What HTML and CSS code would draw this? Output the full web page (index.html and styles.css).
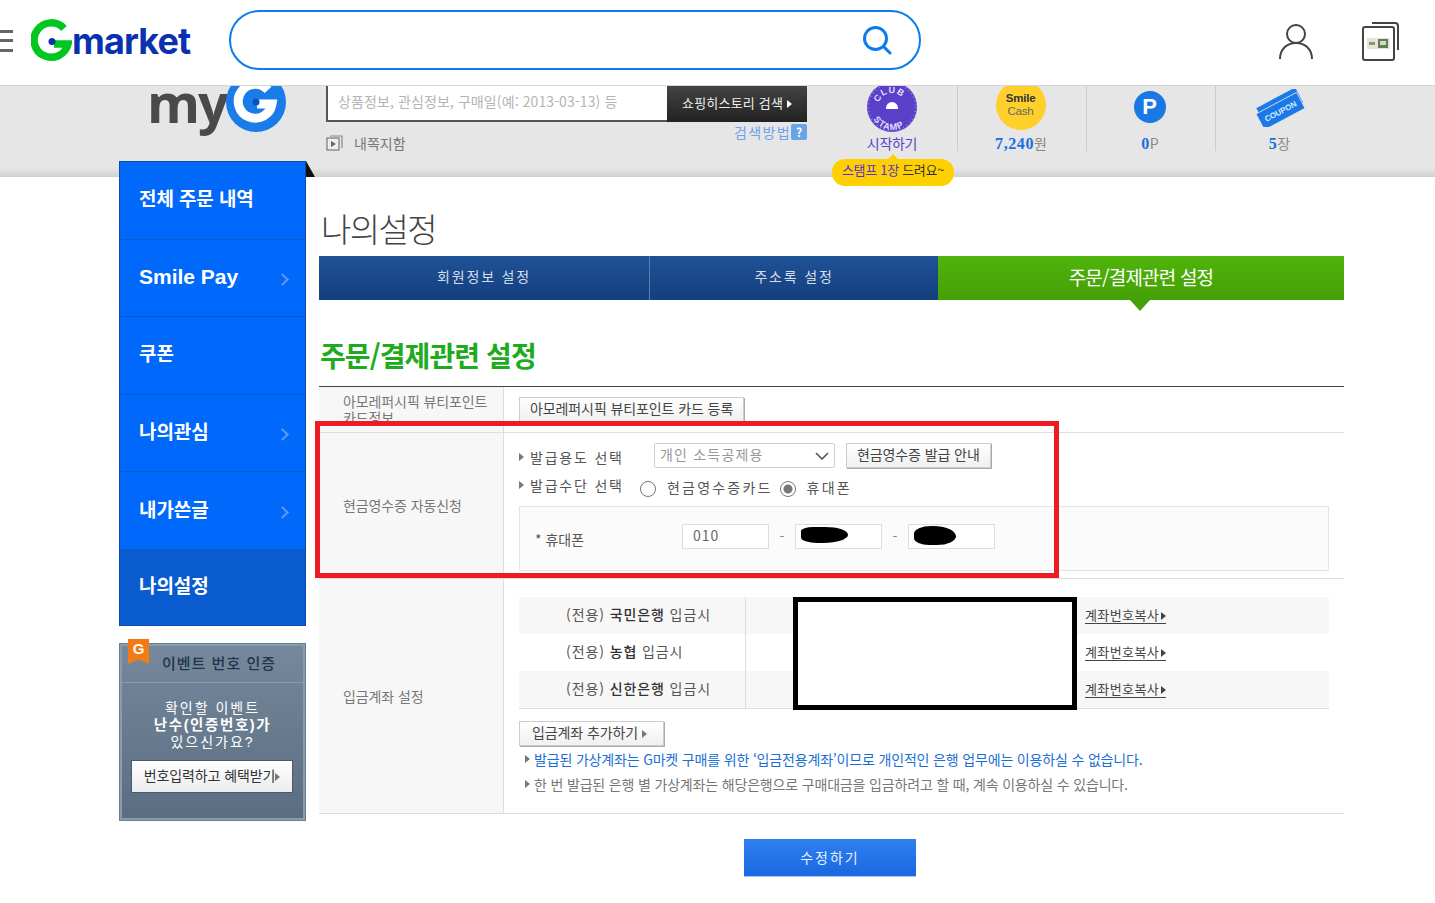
FILE: index.html
```html
<!DOCTYPE html>
<html lang="ko">
<head>
    <meta charset="UTF-8">
    <meta name="viewport" content="width=device-width, initial-scale=1.0">
    <title>Gmarket - 나의설정</title>
    <link rel="stylesheet" href="styles.css">
</head>
<body>
    <header class="top-bar">
        <div class="hamburger"><span></span><span></span><span></span></div>
        <a class="logo" href="#">
            <svg class="logo-g" width="41" height="44" viewBox="0 0 41 44">
                <path d="M33 9.5A17.2 17.2 0 1 0 37 25H23" fill="none" stroke="#00c71f" stroke-width="7.5"/>
                <circle cx="21" cy="22.5" r="3.5" fill="#0a32b0"/>
            </svg>
            <span class="logo-text">market</span>
        </a>
        <div class="search-box">
            <svg width="30" height="30" viewBox="0 0 30 30">
                <circle cx="13.5" cy="13.5" r="11" fill="none" stroke="#0a7cf0" stroke-width="3"/>
                <path d="M21.5 21.5L28 28" stroke="#0a7cf0" stroke-width="3" stroke-linecap="round"/>
            </svg>
        </div>
        <div class="top-icons">
            <svg width="36" height="40" viewBox="0 0 36 40">
                <circle cx="18" cy="13" r="9" fill="none" stroke="#444" stroke-width="2"/>
                <path d="M2 38C2 28 9 22 18 22S34 28 34 38" fill="none" stroke="#444" stroke-width="2"/>
            </svg>
            <svg width="38" height="40" viewBox="0 0 38 40">
                <rect x="2" y="6" width="31" height="33" rx="2" fill="#fff" stroke="#444" stroke-width="2"/>
                <path d="M11 2H34Q37 2 37 5V29" fill="none" stroke="#444" stroke-width="2"/>
                <rect x="6" y="17" width="23" height="11" fill="#e8e2da"/>
                <rect x="8" y="21" width="6" height="3" fill="#8a9a5a"/>
                <rect x="17" y="18" width="10" height="9" fill="#5d7f55"/>
                <rect x="19" y="20" width="6" height="4" fill="#d8d8c0"/>
            </svg>
        </div>
    </header>

    <section class="my-band">
        <div class="my-logo">
            <span class="my-text">my</span>
            <svg width="60" height="60" viewBox="0 0 60 60">
                <circle cx="30" cy="30" r="30" fill="#1a7ce8"/>
                <path d="M42 18A17 17 0 1 0 46 32H31" fill="none" stroke="#fff" stroke-width="9"/>
                <circle cx="30" cy="30" r="3.5" fill="#0a50c0"/>
            </svg>
        </div>
        <div class="history">
            <div class="history-search">
                <div class="history-input">상품정보, 관심정보, 구매일(예: 2013-03-13) 등</div>
                <div class="history-btn">쇼핑히스토리 검색 <i class="arrow-white"></i></div>
            </div>
            <div class="history-foot">
                <span class="narrow">
                    <svg width="17" height="16" viewBox="0 0 17 16">
                        <path d="M4 1H16V13" fill="none" stroke="#888" stroke-width="1.2"/>
                        <rect x="1" y="3" width="12" height="12" fill="#eee" stroke="#888" stroke-width="1.4"/>
                        <path d="M5 6L10 9L5 12Z" fill="#666"/>
                    </svg>
                    내쪽지함
                </span>
                <span class="search-help">검색방법<b class="help-mark">?</b></span>
            </div>
        </div>
        <div class="stats">
            <div class="stat">
                <svg class="stat-icon stamp" width="50" height="50" viewBox="0 0 50 50">
                    <circle cx="25" cy="25" r="25" fill="#5a3fc9"/>
                    <circle cx="25" cy="25" r="23.5" fill="none" stroke="#8b78dc" stroke-width="2" stroke-dasharray="1 3"/>
                    <path id="stamp-top" d="M11 25A14 14 0 0 1 39 25" fill="none"/>
                    <path id="stamp-bottom" d="M4 27A21 21 0 0 0 46 27" fill="none"/>
                    <text class="stamp-text"><textPath href="#stamp-top" startOffset="10%">CLUB</textPath></text>
                    <text class="stamp-text"><textPath href="#stamp-bottom" startOffset="16%">STAMP</textPath></text>
                    <circle cx="25" cy="26" r="6" fill="#fff"/>
                    <rect x="18" y="27" width="14" height="6" fill="#5a3fc9"/>
                </svg>
                <div class="stat-label stamp-label">시작하기</div>
            </div>
            <div class="stat">
                <div class="stat-icon smile"><b>Smile</b>Cash</div>
                <div class="stat-label"><b>7,240</b>원</div>
            </div>
            <div class="stat">
                <div class="stat-icon point">P</div>
                <div class="stat-label"><b>0</b>P</div>
            </div>
            <div class="stat">
                <svg class="stat-icon coupon" width="50" height="38" viewBox="0 0 50 38">
                    <g transform="rotate(-28 25 19)">
                        <rect x="4" y="8" width="44" height="17" fill="#1a7ce8"/>
                        <rect x="1" y="13" width="46" height="18" fill="#1a78e8" stroke="#e6e6e6" stroke-width=".8"/>
                        <text class="coupon-text" x="24" y="25" text-anchor="middle">COUPON</text>
                    </g>
                </svg>
                <div class="stat-label"><b>5</b>장</div>
            </div>
        </div>
        <div class="stamp-tip"><span class="tip-accent">스탬프 1장</span> 드려요~</div>
    </section>

    <div class="content">
        <aside class="side">
            <nav class="side-menu">
                <a class="side-item" href="#">전체 주문 내역</a>
                <a class="side-item side-latin has-arrow" href="#">Smile Pay</a>
                <a class="side-item" href="#">쿠폰</a>
                <a class="side-item has-arrow" href="#">나의관심</a>
                <a class="side-item has-arrow" href="#">내가쓴글</a>
                <a class="side-item active" href="#">나의설정</a>
            </nav>
            <div class="event-box">
                <div class="ribbon">G</div>
                <div class="event-title">이벤트 번호 인증</div>
                <div class="event-body">
                    <p>확인할 이벤트<br><b>난수(인증번호)가</b><br>있으신가요?</p>
                    <a class="event-btn" href="#">번호입력하고 혜택받기<i class="arrow-gray"></i></a>
                </div>
            </div>
        </aside>

        <main class="main">
            <h1 class="page-title">나의설정</h1>
            <div class="tabs">
                <a class="tab tab-1" href="#">회원정보 설정</a>
                <a class="tab tab-2" href="#">주소록 설정</a>
                <a class="tab tab-3 on" href="#">주문/결제관련 설정</a>
            </div>
            <h2 class="section-title">주문/결제관련 설정</h2>

            <div class="settings">
                <div class="set-row row-beauty">
                    <div class="set-label">아모레퍼시픽 뷰티포인트 카드정보</div>
                    <div class="set-body">
                        <button class="btn">아모레퍼시픽 뷰티포인트 카드 등록</button>
                    </div>
                </div>

                <div class="set-row row-receipt">
                    <div class="set-label">현금영수증 자동신청</div>
                    <div class="set-body">
                        <div class="field-line">
                            <span class="field-name"><i class="arrow-gray"></i>발급용도 선택</span>
                            <div class="fake-select">개인 소득공제용
                                <svg width="14" height="8" viewBox="0 0 14 8"><path d="M1 1L7 7L13 1" fill="none" stroke="#555" stroke-width="1.6"/></svg>
                            </div>
                            <button class="btn">현금영수증 발급 안내</button>
                        </div>
                        <div class="field-line line-radio">
                            <span class="field-name"><i class="arrow-gray"></i>발급수단 선택</span>
                            <span class="radio"></span><span class="radio-text">현금영수증카드</span>
                            <span class="radio checked"></span><span class="radio-text">휴대폰</span>
                        </div>
                        <div class="phone-box">
                            <span class="phone-label">* 휴대폰</span>
                            <div class="phone-input">010</div>
                            <span class="dash">-</span>
                            <div class="phone-input"><span class="blob blob-1"></span></div>
                            <span class="dash">-</span>
                            <div class="phone-input"><span class="blob blob-2"></span></div>
                        </div>
                    </div>
                    <div class="red-box"></div>
                </div>

                <div class="set-row row-account">
                    <div class="set-label">입금계좌 설정</div>
                    <div class="set-body">
                        <div class="bank-table">
                            <div class="bank-row">
                                <div class="bank-name">(전용) <b>국민은행</b> 입금시</div>
                                <div class="bank-no"></div>
                                <a class="copy-link" href="#">계좌번호복사<i class="arrow-dark"></i></a>
                            </div>
                            <div class="bank-row">
                                <div class="bank-name">(전용) <b>농협</b> 입금시</div>
                                <div class="bank-no"></div>
                                <a class="copy-link" href="#">계좌번호복사<i class="arrow-dark"></i></a>
                            </div>
                            <div class="bank-row">
                                <div class="bank-name">(전용) <b>신한은행</b> 입금시</div>
                                <div class="bank-no"></div>
                                <a class="copy-link" href="#">계좌번호복사<i class="arrow-dark"></i></a>
                            </div>
                            <div class="black-box"></div>
                        </div>
                        <button class="btn btn-add">입금계좌 추가하기 <i class="arrow-gray"></i></button>
                        <p class="note note-blue"><i class="arrow-gray"></i>발급된 가상계좌는 G마켓 구매를 위한 ‘입금전용계좌’이므로 개인적인 은행 업무에는 이용하실 수 없습니다.</p>
                        <p class="note"><i class="arrow-gray"></i>한 번 발급된 은행 별 가상계좌는 해당은행으로 구매대금을 입금하려고 할 때, 계속 이용하실 수 있습니다.</p>
                    </div>
                </div>
            </div>

            <div class="submit-wrap">
                <button class="submit">수정하기</button>
            </div>
        </main>
    </div>
</body>
</html>
```

FILE: styles.css
```css
* {
    box-sizing: border-box;
}
body {
    margin: 0;
    font-family: "Noto Sans CJK KR", "Noto Sans", sans-serif;
    font-size: 14px;
    color: #666;
    background-color: #fff;
    height: 903px;
    overflow: hidden;
}
a {
    text-decoration: none;
    color: inherit;
}
p {
    margin: 0;
}

/* small triangles */
.arrow-white, .arrow-gray, .arrow-dark {
    display: inline-block;
    width: 0;
    height: 0;
    border-style: solid;
    border-width: 4px 0 4px 5px;
    border-color: transparent transparent transparent #fff;
}
.arrow-gray {
    border-left-color: #777;
}
.arrow-dark {
    border-left-color: #444;
    margin-left: 2px;
}

/* top bar */
.top-bar {
    position: relative;
    z-index: 3;
    display: flex;
    align-items: center;
    height: 85px;
    background-color: #fff;
    box-shadow: 0 1px 0 #d6d6d6;
}
.hamburger {
    display: flex;
    flex-direction: column;
    justify-content: space-between;
    width: 13px;
    height: 22px;
    margin: -4px 0 0 0;
}
.hamburger span {
    height: 3px;
    background-color: #666;
}
.logo {
    display: flex;
    align-items: flex-end;
    width: 198px;
    margin-left: 18px;
    margin-bottom: 6px;
}
.logo-g {
    flex: none;
    margin-bottom: -2px;
}
.logo-text {
    font-family: Inter, sans-serif;
    font-weight: 700;
    font-size: 36px;
    line-height: 32px;
    letter-spacing: -0.9px;
    color: #0a32b0;
    margin-bottom: 4px;
}
.search-box {
    display: flex;
    align-items: center;
    justify-content: flex-end;
    width: 692px;
    height: 60px;
    margin-top: -5px;
    padding-right: 27px;
    padding-bottom: 1px;
    border: 2px solid #0a7cf0;
    border-radius: 30px;
}
.top-icons {
    display: flex;
    align-items: center;
    gap: 47px;
    margin-left: 357px;
    margin-top: -4px;
}

/* grey band */
.my-band {
    position: relative;
    display: flex;
    height: 92px;
    padding-left: 149px;
    background: linear-gradient(#e6e6e6 90%, #d0d0d0);
}
.my-logo {
    display: flex;
    flex: none;
    width: 177px;
    height: 60px;
    margin-top: -13px;
}
.my-text {
    font-family: "Open Sans", sans-serif;
    font-weight: 700;
    font-size: 54px;
    line-height: 60px;
    letter-spacing: -2px;
    color: #4a4a4a;
    margin-left: -2px;
}
.my-logo svg {
    margin-left: -1px;
}
.history {
    flex: none;
    width: 481px;
}
.history-search {
    display: flex;
    height: 37px;
}
.history-input {
    flex: 1;
    padding: 6px 0 0 10px;
    background-color: #fff;
    border: solid #555;
    border-width: 0 0 2px 2px;
    color: #b4b4b4;
    font-size: 14px;
    letter-spacing: 0.1px;
}
.history-btn {
    width: 140px;
    padding-top: 8px;
    text-align: center;
    background: linear-gradient(#444, #222);
    color: #eee;
    font-size: 13px;
    letter-spacing: 0.2px;
}
.history-foot {
    display: flex;
    justify-content: space-between;
}
.narrow {
    display: flex;
    align-items: center;
    gap: 11px;
    margin-top: 11px;
    color: #777;
}
.search-help {
    display: flex;
    align-items: center;
    height: 17px;
    margin-top: 1px;
    color: #6aa3e8;
    letter-spacing: 1.4px;
}
.help-mark {
    width: 16px;
    height: 16px;
    border-radius: 2px;
    background-color: #6aa3e8;
    color: #fff;
    font-size: 12px;
    line-height: 16px;
    text-align: center;
    letter-spacing: 0;
}
.stats {
    display: flex;
    margin-left: 22px;
}
.stat {
    display: flex;
    flex-direction: column;
    align-items: center;
    width: 129px;
    height: 66px;
    border-right: 1px solid #ccc;
    position: relative;
}
.stat:last-child {
    border-right: 0;
}
.stat-icon {
    flex: none;
}
.stat-label {
    position: absolute;
    top: 47px;
    left: 0;
    right: 2px;
    text-align: center;
    font-size: 14px;
    line-height: 22px;
    color: #888;
}
.stat-label b {
    color: #1a6fe0;
    font-family: "Liberation Serif", serif;
    font-size: 16px;
    letter-spacing: 0.6px;
}
.stamp {
    margin-top: -3px;
    margin-left: -2px;
}
.stamp-text {
    font-family: "Liberation Sans", sans-serif;
    font-size: 9px;
    font-weight: 700;
    letter-spacing: 1px;
    fill: #e4dffa;
}
.stamp-label {
    color: #5a3fc9;
    letter-spacing: -0.3px;
}
.smile {
    width: 50px;
    height: 50px;
    margin-top: -5px;
    margin-left: -3px;
    padding-top: 12px;
    border-radius: 50%;
    background-color: #ffd02b;
    color: #666;
    font-family: "Liberation Sans", sans-serif;
    font-size: 11.5px;
    line-height: 13.2px;
    text-align: center;
    letter-spacing: -0.2px;
}
.smile b {
    display: block;
    color: #333;
}
.point {
    width: 32px;
    height: 32px;
    margin-top: 6px;
    margin-left: -3px;
    border-radius: 50%;
    background-color: #1a78e4;
    color: #fff;
    font-family: "Liberation Sans", sans-serif;
    font-weight: 700;
    font-size: 22px;
    line-height: 32px;
    text-align: center;
}
.coupon {
    margin-top: 4px;
    margin-left: -2px;
}
.coupon-text {
    font-family: "Liberation Sans", sans-serif;
    font-weight: 700;
    font-size: 8px;
    fill: #dbeaff;
}
.stamp-tip {
    position: absolute;
    left: 832px;
    top: 74px;
    z-index: 2;
    width: 122px;
    height: 27px;
    padding-bottom: 5px;
    border-radius: 13px;
    background-color: #ffd000;
    color: #333;
    font-size: 13px;
    line-height: 22px;
    letter-spacing: -0.3px;
    text-align: center;
}
.stamp-tip::before {
    content: "";
    position: absolute;
    left: 56px;
    top: -5px;
    border-style: solid;
    border-width: 0 5px 5px 5px;
    border-color: transparent transparent #ffd000 transparent;
}
.tip-accent {
    color: #5a30d0;
}

/* page body */
.content {
    display: flex;
    margin-top: -16px;
    padding-left: 119px;
}
.side {
    position: relative;
    z-index: 1;
    flex: none;
    width: 187px;
}
.side::after {
    content: "";
    position: absolute;
    left: 187px;
    top: 0;
    border-style: solid;
    border-width: 0 9px 16px 0;
    border-color: transparent transparent #111 transparent;
}
.side-menu {
    display: flex;
    flex-direction: column;
    height: 465px;
    border: 1px solid #0a4ba5;
    background-color: #0068fb;
}
.side-item {
    position: relative;
    display: flex;
    flex: 0 0 77.6px;
    align-items: center;
    padding: 0 0 5px 19px;
    border-bottom: 1px solid #0a5bc8;
    color: #fff;
    font-size: 19px;
    font-weight: 700;
    letter-spacing: -0.1px;
}
.side-latin {
    padding-bottom: 2px;
    font-family: "Liberation Sans", sans-serif;
    font-size: 21px;
    letter-spacing: 0;
}
.side-item:last-child {
    flex: 1;
    border-bottom: 0;
}
.side-item.active {
    background-color: #0a5bd0;
}
.has-arrow::after {
    content: "";
    position: absolute;
    right: 18px;
    top: 50%;
    width: 7px;
    height: 7px;
    margin-top: -3px;
    border: solid #5d9bf5;
    border-width: 2px 2px 0 0;
    transform: rotate(45deg);
}
.event-box {
    position: relative;
    height: 178px;
    margin-top: 17px;
    border: 3px solid #8b9bac;
    outline: 1px solid #6d7f92;
    outline-offset: -1px;
    background: linear-gradient(#76889b, #5a6d82);
}
.ribbon {
    position: absolute;
    left: 6px;
    top: -7px;
    width: 21px;
    height: 25px;
    padding-top: 1px;
    background-color: #f47a14;
    clip-path: polygon(0 0, 100% 0, 100% 100%, 50% 82%, 0 100%);
    color: #fff;
    font-family: "Liberation Sans", sans-serif;
    font-size: 15px;
    font-weight: 700;
    line-height: 17px;
    text-align: center;
}
.event-title {
    height: 37px;
    border-bottom: 1px solid #8b9bac;
    padding-left: 13px;
    text-align: center;
    color: #1e344f;
    font-size: 15px;
    font-weight: 500;
    line-height: 33px;
    letter-spacing: 1px;
}
.event-body {
    padding-top: 17px;
    text-align: center;
    color: #fff;
    font-family: "Liberation Sans", "Noto Sans CJK KR", sans-serif;
    font-size: 14px;
    line-height: 17px;
    letter-spacing: 2px;
}
.event-body b {
    font-size: 14.5px;
    letter-spacing: 1.6px;
}
.event-btn {
    display: block;
    width: 162px;
    height: 33px;
    margin: 9px 0 0 9px;
    border: 1px solid #47596d;
    background: linear-gradient(#fff, #ececec);
    color: #333;
    font-family: "Noto Sans CJK KR", sans-serif;
    font-size: 14px;
    line-height: 28px;
    letter-spacing: -0.1px;
}

/* main column */
.main {
    flex: none;
    width: 1025px;
    margin-left: 13px;
}
.page-title {
    height: 95px;
    margin: 0;
    padding: 42px 0 0 2px;
    color: #444;
    font-size: 33px;
    font-weight: 300;
    line-height: 50px;
    letter-spacing: -1.6px;
}
.tabs {
    display: flex;
    height: 44px;
}
.tab {
    display: flex;
    align-items: center;
    justify-content: center;
    padding-bottom: 4px;
    background: linear-gradient(#1f5296, #153f7f);
    color: #d5deea;
    font-size: 14px;
    letter-spacing: 1.8px;
}
.tab-1 {
    width: 331px;
    border-right: 1px solid #5a7fb0;
}
.tab-2 {
    width: 288px;
}
.tab-3 {
    position: relative;
    flex: 1;
    background: linear-gradient(#4fb40b, #45a005);
    color: #fff;
    font-size: 19px;
    font-weight: 400;
    letter-spacing: -0.8px;
}
.tab-3::after {
    content: "";
    position: absolute;
    left: 192px;
    top: 44px;
    border-style: solid;
    border-width: 11px 10px 0 10px;
    border-color: #45a005 transparent transparent transparent;
}
.section-title {
    height: 86px;
    margin: 0;
    padding: 34px 0 0 1px;
    color: #1eab1e;
    font-size: 28px;
    font-weight: 700;
    line-height: 42px;
    letter-spacing: -0.9px;
}
.settings {
    border-top: 1px solid #444;
}
.set-row {
    position: relative;
    display: flex;
    border-bottom: 1px solid #ddd;
}
.set-label {
    flex: none;
    display: flex;
    align-items: center;
    width: 185px;
    padding: 0 8px 0 24px;
    background-color: #f7f7f7;
    border-right: 1px solid #ddd;
    color: #777;
    font-size: 14px;
    line-height: 16px;
    letter-spacing: -0.1px;
}
.set-body {
    flex: 1;
    padding-left: 15px;
    padding-right: 15px;
}
.row-beauty {
    height: 46px;
    overflow: hidden;
}
.row-beauty .set-label {
    align-items: flex-start;
    padding-top: 6px;
}
.row-beauty .set-body {
    padding-top: 10px;
}
.row-receipt {
    height: 146px;
}
.row-receipt .set-label {
    padding-bottom: 2px;
}
.row-account {
    height: 235px;
}
.row-account .set-body {
    padding-top: 18px;
}
.btn {
    height: 25px;
    padding: 0 10px 3px;
    border: 1px solid #ccc;
    box-shadow: 1px 1px 0 #aaa;
    background: linear-gradient(#fff, #f0f0f0);
    color: #444;
    font-family: inherit;
    font-size: 14px;
    line-height: 20px;
    letter-spacing: -0.1px;
}
.field-line {
    display: flex;
    align-items: center;
    height: 25px;
    margin-top: 10px;
}
.field-name {
    display: flex;
    align-items: center;
    width: 135px;
    color: #555;
    font-size: 14px;
    margin-top: 2px;
    letter-spacing: 1.8px;
}
.field-name .arrow-gray {
    margin-right: 6px;
}
.fake-select {
    display: flex;
    align-items: center;
    justify-content: space-between;
    width: 181px;
    height: 25px;
    margin-right: 11px;
    padding: 0 5px 3px 5px;
    background-color: #fff;
    border: 1px solid #d0d0d0;
    border-radius: 2px;
    color: #999;
    font-size: 14px;
    letter-spacing: 1.2px;
}
.fake-select svg {
    margin-top: 3px;
}
.line-radio {
    margin-top: 6px;
}
.line-radio .field-name {
    margin-top: -4px;
}
.radio {
    width: 16px;
    height: 16px;
    margin-left: -14px;
    border: 1px solid #777;
    border-radius: 50%;
    background-color: #fff;
    margin-top: 4px;
}
.radio.checked {
    margin-left: 7px;
    background: radial-gradient(#777 0 4px, #fff 5px);
}
.radio-text {
    margin-left: 11px;
    color: #555;
    font-size: 14px;
    letter-spacing: 2.2px;
}
.phone-box {
    display: flex;
    align-items: center;
    height: 65px;
    margin-top: 7px;
    padding: 0 0 5px 15px;
    background-color: #fbfbfb;
    border: 1px solid #e5e5e5;
}
.phone-label {
    width: 147px;
    margin-top: 5px;
    color: #555;
}
.phone-input {
    display: flex;
    align-items: center;
    position: relative;
    width: 87px;
    height: 25px;
    padding: 0 0 2px 10px;
    background-color: #fff;
    border: 1px solid #ddd;
    color: #666;
    font-size: 14px;
    letter-spacing: 1px;
}
.dash {
    width: 26px;
    text-align: center;
    color: #888;
}
.blob {
    position: absolute;
    background-color: #000;
}
.blob-1 {
    left: 5px;
    top: 2px;
    width: 47px;
    height: 16px;
    border-radius: 30% 55% 60% 40%;
}
.blob-2 {
    left: 5px;
    top: 1px;
    width: 42px;
    height: 19px;
    border-radius: 45% 60% 50% 40%;
}
.red-box {
    position: absolute;
    left: -4px;
    top: -12px;
    width: 744px;
    height: 157px;
    border: 5px solid #ed1c24;
    pointer-events: none;
}
.bank-table {
    position: relative;
    border-bottom: 1px solid #ddd;
}
.bank-row {
    display: flex;
    align-items: center;
    height: 37px;
    color: #555;
    font-size: 14px;
}
.bank-row:nth-child(odd) {
    background-color: #f7f7f7;
}
.bank-name {
    width: 227px;
    height: 100%;
    padding: 7px 0 0 47px;
    border-right: 1px solid #ddd;
    letter-spacing: 0.9px;
}
.bank-name b {
    color: #333;
    font-weight: 500;
}
.bank-no {
    width: 339px;
}
.copy-link {
    color: #444;
    border-bottom: 1px solid #444;
    font-size: 13px;
    line-height: 16px;
    letter-spacing: 0.4px;
}
.black-box {
    position: absolute;
    left: 274px;
    top: 0;
    width: 284px;
    height: 113px;
    background-color: #fff;
    border: 5px solid #000;
}
.btn-add {
    display: block;
    margin: 12px 0 0;
    padding: 0 10px 3px 12px;
    width: 145px;
    white-space: nowrap;
    text-align: left;
}
.note {
    display: flex;
    align-items: center;
    height: 25px;
    margin-left: 6px;
    font-size: 14px;
    letter-spacing: -0.17px;
    white-space: nowrap;
    color: #777;
}
.note .arrow-gray {
    margin-right: 4px;
}
.note-blue {
    color: #1a6fd6;
}
.submit-wrap {
    padding: 25px 0 0 425px;
}
.submit {
    width: 172px;
    height: 37px;
    padding-bottom: 3px;
    border: 0;
    box-shadow: 0 1px 0 #a8c6f0;
    background: linear-gradient(#2f80f2, #1a68e0);
    color: #e6f0ff;
    font-family: inherit;
    font-size: 14px;
    letter-spacing: 2px;
}
```
